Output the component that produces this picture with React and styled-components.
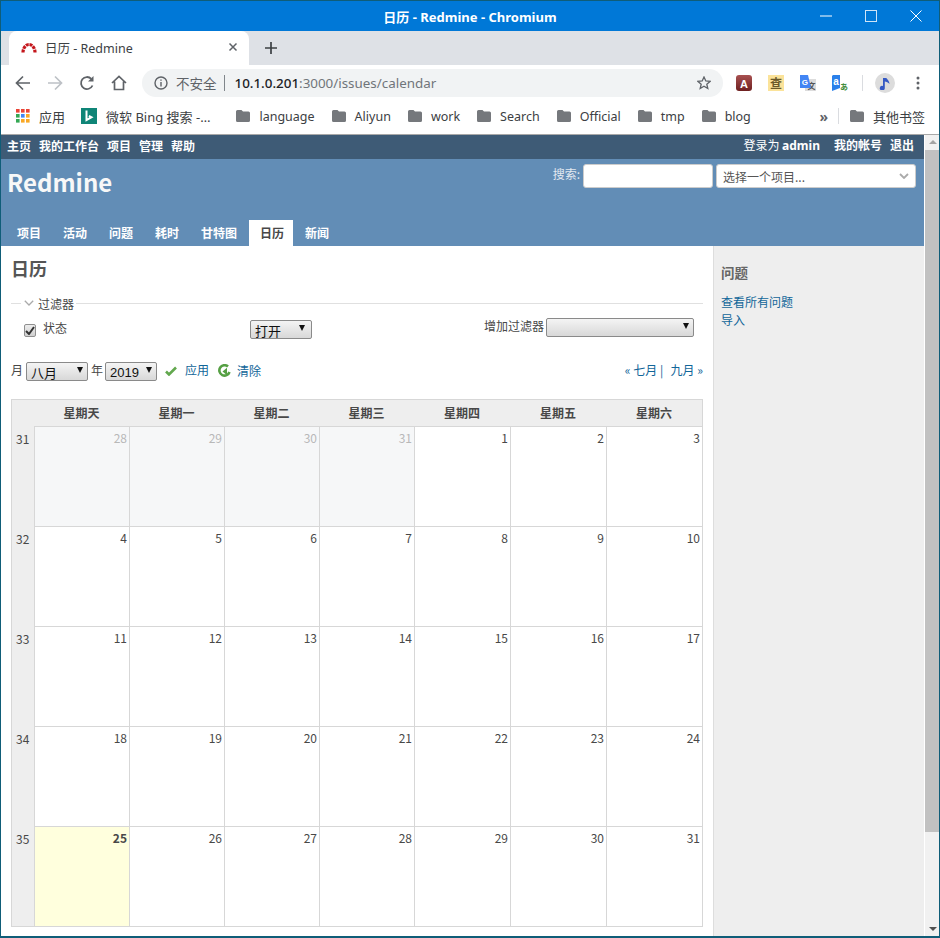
import React from "react";
import styled, { createGlobalStyle } from "styled-components";

const GlobalStyle = createGlobalStyle`
  html, body {
    margin: 0;
    padding: 0;
    background: #fff;
    overflow: hidden;
  }
  * { box-sizing: border-box; }
`;

const SANS = `"Noto Sans", "Noto Sans CJK SC", sans-serif`;
const CJK = `"Noto Sans CJK SC", "Noto Sans", sans-serif`;

const Window = styled.div`
  width: 940px;
  height: 938px;
  border: 1px solid #0f5d78;
  border-bottom-width: 2px;
  display: flex;
  flex-direction: column;
  overflow: hidden;
  font-family: ${CJK};
`;

const TitleBar = styled.div`
  height: 30px;
  flex: none;
  background: #0078d7;
  color: #fff;
  font: bold 13px ${SANS};
  display: flex;
  align-items: center;
  justify-content: center;
  position: relative;
`;

const WindowControls = styled.div`
  position: absolute;
  right: 0;
  top: 0;
  height: 30px;
  display: flex;
  align-items: center;
  gap: 33px;
  padding-right: 17px;
`;

const TabStrip = styled.div`
  height: 34px;
  flex: none;
  background: #dee1e6;
  display: flex;
  align-items: flex-end;
  padding-left: 8px;
`;

const Tab = styled.div`
  width: 240px;
  height: 34px;
  background: #fff;
  border-radius: 8px 8px 0 0;
  display: flex;
  align-items: center;
  padding: 0 11px 2px 12px;
  gap: 8px;
  font: 12.5px ${SANS};
  color: #3c4043;
`;

const TabTitle = styled.span`
  flex: 1;
`;

const NewTab = styled.div`
  width: 44px;
  height: 34px;
  display: flex;
  align-items: center;
  justify-content: center;
`;

const Toolbar = styled.div`
  height: 35px;
  flex: none;
  background: #fff;
  display: flex;
  align-items: center;
  padding-left: 14px;
`;

const NavIcons = styled.div`
  display: flex;
  align-items: center;
  gap: 16px;
`;

const Omnibox = styled.div`
  width: 581px;
  height: 28px;
  margin-left: 15px;
  border-radius: 14px;
  background: #f1f3f4;
  display: flex;
  align-items: center;
  padding: 0 12px 0 12px;
  color: #5f6368;
`;

const Insecure = styled.span`
  margin-left: 8px;
  padding-right: 7px;
  border-right: 1px solid #80868b;
  line-height: 16px;
  font-size: 13.5px;
`;

const Url = styled.span`
  margin-left: 10px;
  flex: 1;
  color: #70757a;
  font: 13.4px ${SANS};
  b {
    font-weight: 500;
    color: #202124;
  }
`;

const Extensions = styled.div`
  display: flex;
  align-items: center;
  gap: 16px;
  margin-left: 13px;
`;

const Divider = styled.div`
  width: 1px;
  height: 16px;
  background: #dadce0;
  margin-left: ${({ $ml }) => $ml || 0}px;
`;

const Avatar = styled.div`
  width: 20px;
  height: 20px;
  border-radius: 50%;
  background: #dcdcdc;
  display: flex;
  align-items: center;
  justify-content: center;
  margin-left: 12px;
`;

const MoreDots = styled.svg`
  margin-left: 21px;
`;

const Bookmarks = styled.div`
  height: 35px;
  flex: none;
  background: #fff;
  border-bottom: 1px solid #a8a8a8;
  display: flex;
  align-items: center;
  padding: 0 0 2px 15px;
  font: 12.5px ${SANS};
  color: #3c4043;
`;

const Bookmark = styled.div`
  display: flex;
  align-items: center;
  gap: 9px;
  font-size: ${({ $cjk }) => ($cjk ? "13px" : "12.5px")};
  margin-right: ${({ $gap }) => $gap}px;
  white-space: nowrap;
`;

const BookmarkSpacer = styled.div`
  flex: 1;
`;

const Chevrons = styled.span`
  color: #5f6368;
  font-size: 14px;
  font-weight: 700;
  margin-right: 10px;
`;

const OtherBookmarks = styled(Bookmark)`
  margin-left: 11px;
  margin-right: 14px;
`;

const Viewport = styled.div`
  flex: 1;
  display: flex;
  min-height: 0;
`;

const Page = styled.div`
  width: 923px;
  display: flex;
  flex-direction: column;
  font-size: 12px;
  color: #484848;
`;

const Scrollbar = styled.div`
  width: 15px;
  background: #f1f1f1;
  margin-left: 1px;
  margin-right: -1px;
  position: relative;
`;

const ScrollThumb = styled.div`
  position: absolute;
  left: 0;
  top: 15px;
  width: 100%;
  height: 682px;
  background: #c1c1c1;
`;

const ScrollArrow = styled.div`
  position: absolute;
  left: 4px;
  width: 0;
  height: 0;
  border-left: 4px solid transparent;
  border-right: 4px solid transparent;
  ${({ $down }) =>
    $down
      ? "bottom: 5px; border-top: 4px solid #505050;"
      : "top: 5px; border-bottom: 4px solid #a3a3a3;"}
`;

const TopMenu = styled.div`
  height: 24px;
  flex: none;
  background: #3e5b76;
  color: #fff;
  display: flex;
  align-items: center;
  justify-content: space-between;
  padding: 0 10px 4px 6px;
  font-weight: 700;
  font-size: 12px;
`;

const MenuGroup = styled.div`
  display: flex;
  gap: ${({ $gap }) => $gap}px;
`;

const LoggedAs = styled.span`
  font-weight: 400;
  margin-right: 6px;
  b {
    font-family: ${SANS};
    font-weight: 700;
  }
`;

const Header = styled.div`
  height: 87px;
  flex: none;
  background: #628db6;
  position: relative;
  padding: 5px 0 0 6px;
  color: #f8f8f8;
`;

const Brand = styled.h1`
  margin: 0;
  font: 700 24px/36px ${CJK};
  color: #f8f8f8;
`;

const QuickSearch = styled.div`
  position: absolute;
  right: 8px;
  top: 5px;
  display: flex;
  align-items: flex-start;
  gap: 3px;
  font-size: 12px;
  color: #e2e8f0;
`;

const SearchLabel = styled.span`
  line-height: 20px;
`;

const SearchInput = styled.input`
  width: 130px;
  height: 24px;
  border: 1px solid #ccc;
  border-radius: 3px;
  background: #fff;
  padding: 0;
`;

const ProjectJump = styled.div`
  width: 200px;
  height: 24px;
  border: 1px solid #ccc;
  border-radius: 3px;
  background: #fff;
  color: #555;
  display: flex;
  align-items: center;
  justify-content: space-between;
  padding: 0 6px 0 6px;
  font-size: 12px;
`;

const MainMenu = styled.div`
  position: absolute;
  left: 5px;
  bottom: 0;
  display: flex;
  height: 26px;
  font-weight: 700;
  font-size: 12px;
`;

const MainTab = styled.div`
  display: flex;
  align-items: center;
  padding: ${({ $active }) => ($active ? "0 9px 2px 11px" : "0 11px 2px")};
  margin: ${({ $active }) => ($active ? "0 1px" : "0")};
  background: ${({ $active }) => ($active ? "#fff" : "transparent")};
  color: ${({ $active }) => ($active ? "#484848" : "#fff")};
`;

const Body = styled.div`
  flex: 1;
  display: flex;
  min-height: 0;
`;

const Content = styled.div`
  width: 712px;
  background: #fff;
  padding: 9px 10px 0 10px;
`;

const PageTitle = styled.h2`
  margin: 0;
  font-size: 18px;
  line-height: 26px;
  font-weight: 700;
  color: #555;
`;

const FilterLegend = styled.div`
  display: flex;
  align-items: center;
  margin-top: 14px;
  font-size: 12px;
  height: 16px;
  &::before {
    content: "";
    width: 10px;
    height: 1px;
    background: #e0e0e0;
    margin-right: 3px;
  }
  &::after {
    content: "";
    flex: 1;
    height: 1px;
    background: #e0e0e0;
    margin-left: 2px;
  }
`;

const LegendChevron = styled.svg`
  margin-right: 4px;
`;

const FilterRow = styled.div`
  display: grid;
  grid-template-columns: 226px 1fr auto;
  height: 26px;
  padding: 0 9px 0 13px;
  margin-top: 7px;
  align-items: start;
`;

const FilterName = styled.div`
  display: flex;
  align-items: center;
  gap: 7px;
  height: 18px;
`;

const Checkbox = styled.span`
  width: 12px;
  height: 13px;
  margin-top: 6px;
  border: 1px solid #8f8f8f;
  border-radius: 2px;
  background: linear-gradient(#ededed, #d0d0d0);
  display: flex;
  align-items: center;
  justify-content: center;
`;

const AddFilter = styled.div`
  display: flex;
  align-items: flex-start;
  gap: 2px;
  white-space: nowrap;
  line-height: 15px;
`;

const NativeSelect = styled.div`
  width: ${({ $w }) => $w}px;
  height: 19px;
  margin-top: ${({ $mt }) => $mt || 0}px;
  margin-left: ${({ $ml }) => $ml || 0}px;
  border: 1px solid #8a8a8a;
  border-radius: 2px;
  background: linear-gradient(#f4f4f4, #d8d8d8);
  color: #111;
  font-size: 13px;
  line-height: 17px;
  padding-left: 4px;
  position: relative;
  flex: none;
  &::after {
    content: "";
    position: absolute;
    right: ${({ $arrow }) => $arrow || 4}px;
    top: 4px;
    border-left: 3.5px solid transparent;
    border-right: 3.5px solid transparent;
    border-top: 6px solid #111;
  }
`;

const SelectText = styled.span`
  position: relative;
  display: inline-block;
  line-height: 17px;
  top: ${({ $low }) => ($low ? "1px" : "0")};
  font-family: ${({ $latin }) => ($latin ? `"Liberation Sans", sans-serif` : CJK)};
`;

const DateRow = styled.div`
  display: flex;
  align-items: flex-start;
  height: 19px;
  margin-top: 18px;
  line-height: 15px;
  justify-content: space-between;
`;

const DateForm = styled.div`
  display: flex;
  align-items: flex-start;
  gap: 3px;
`;

const ActionLink = styled.a`
  color: #169;
  display: inline-flex;
  align-items: center;
  gap: ${({ $gap }) => $gap}px;
  margin-left: ${({ $ml }) => $ml}px;
  svg {
    margin-top: 2px;
  }
`;

const Paging = styled.div`
  color: #169;
  white-space: pre;
`;

const PagingNext = styled.span`
  margin-left: 2px;
`;

const Calendar = styled.div`
  display: grid;
  grid-template-columns: 22px repeat(4, 95px) repeat(3, 96px);
  grid-template-rows: 26px;
  grid-auto-rows: 100px;
  width: 692px;
  margin-top: 18px;
  border: 1px solid #d7d7d7;
`;

const WeekHead = styled.div`
  background: #eeeeee;
  font-weight: 700;
  color: #484848;
  display: flex;
  align-items: center;
  justify-content: center;
  padding-bottom: 2px;
`;

const WeekNumber = styled.div`
  background: #eeeeee;
  font: 12px ${CJK};
  padding: 4px 0 0 4px;
  color: #484848;
`;

const Day = styled.div`
  border-left: 1px solid #d7d7d7;
  border-top: 1px solid #d7d7d7;
  background: ${({ $today, $other }) => ($today ? "#ffffdd" : $other ? "#f6f7f8" : "#fff")};
  color: ${({ $other }) => ($other ? "#b8b8b8" : "#484848")};
  font: ${({ $today }) => ($today ? 700 : 400)} 12px ${CJK};
  text-align: right;
  padding: 2px 2px 0 0;
`;

const Sidebar = styled.div`
  flex: 1;
  background: #eeeeee;
  border-left: 1px solid #ddd;
  padding: 16px 7px;
`;

const SideTitle = styled.h3`
  margin: 0 0 11px;
  font-size: 13.5px;
  line-height: 20px;
  font-weight: 700;
  color: #666;
`;

const SideLink = styled.a`
  display: block;
  color: #169;
  line-height: 18px;
`;

const Folder = () => (
  <svg width="14" height="12" viewBox="0 0 14 12">
    <path fill="#75787c" d="M1.5 0h4l1.5 1.5h5.5A1.5 1.5 0 0 1 14 3v7.5a1.5 1.5 0 0 1-1.5 1.5h-11A1.5 1.5 0 0 1 0 10.5v-9A1.5 1.5 0 0 1 1.5 0z" />
  </svg>
);

const RedmineLogo = () => (
  <svg width="16" height="12" viewBox="0 0 16 12">
    <path
      d="M2 11.500A6 8 0 0 1 14 11.500"
      fill="none"
      stroke="#c4161c"
      strokeWidth="3.200"
      strokeDasharray="3 0.800"
    />
  </svg>
);

const AppsGrid = () => {
  const colors = ["#ea4335", "#ea4335", "#ea4335", "#34a853", "#4285f4", "#f9a825", "#34a853", "#f9a825", "#f9a825"];
  return (
    <svg width="14" height="14" viewBox="0 0 14 14">
      {colors.map((c, i) => (
        <rect key={i} x={(i % 3) * 5} y={Math.floor(i / 3) * 5} width="3.6" height="3.6" fill={c} />
      ))}
    </svg>
  );
};

const BingIcon = () => (
  <svg width="16" height="16" viewBox="0 0 16 16">
    <rect width="16" height="16" fill="#0f8577" />
    <path fill="none" stroke="#fff" strokeWidth="2" d="M5.500 2.500v9.500l5-2.800-2.600-1.400" />
  </svg>
);

const topLeft = ["主页", "我的工作台", "项目", "管理", "帮助"];
const tabs = ["项目", "活动", "问题", "耗时", "甘特图", "日历", "新闻"];
const heads = ["星期天", "星期一", "星期二", "星期三", "星期四", "星期五", "星期六"];
const folders = ["language", "Aliyun", "work", "Search", "Official", "tmp", "blog"];

const weeks = [
  { n: 31, days: [28, 29, 30, 31, 1, 2, 3], other: 4 },
  { n: 32, days: [4, 5, 6, 7, 8, 9, 10] },
  { n: 33, days: [11, 12, 13, 14, 15, 16, 17] },
  { n: 34, days: [18, 19, 20, 21, 22, 23, 24] },
  { n: 35, days: [25, 26, 27, 28, 29, 30, 31], today: 0 },
];

export default function App() {
  return (
    <Window>
      <GlobalStyle />
      <TitleBar>
        日历 - Redmine - Chromium
        <WindowControls>
          <svg width="12" height="12" viewBox="0 0 12 12">
            <path d="M0 6h12" stroke="#fff" strokeWidth="1" />
          </svg>
          <svg width="12" height="12" viewBox="0 0 12 12">
            <rect x=".5" y=".5" width="11" height="11" fill="none" stroke="#cfe4f7" />
          </svg>
          <svg width="12" height="12" viewBox="0 0 12 12">
            <path d="M.5.5l11 11M11.5.5l-11 11" stroke="#fff" />
          </svg>
        </WindowControls>
      </TitleBar>
      <TabStrip>
        <Tab>
          <RedmineLogo />
          <TabTitle>日历 - Redmine</TabTitle>
          <svg width="10" height="10" viewBox="0 0 10 10">
            <path d="M1.500 1.500l7 7M8.500 1.500l-7 7" stroke="#5f6368" strokeWidth="1.500" />
          </svg>
        </Tab>
        <NewTab>
          <svg width="12" height="12" viewBox="0 0 12 12">
            <path d="M6 0v12M0 6h12" stroke="#3c4043" strokeWidth="1.700" />
          </svg>
        </NewTab>
      </TabStrip>
      <Toolbar>
        <NavIcons>
          <svg width="16" height="16" viewBox="0 0 16 16">
            <path d="M15 8H2M8 1.500L1.500 8 8 14.500" fill="none" stroke="#5f6368" strokeWidth="1.700" />
          </svg>
          <svg width="16" height="16" viewBox="0 0 16 16">
            <path d="M1 8h13M8 1.500L14.500 8 8 14.500" fill="none" stroke="#bdc1c6" strokeWidth="1.700" />
          </svg>
          <svg width="16" height="16" viewBox="0 0 16 16">
            <path d="M13.500 10.500A6 6 0 1 1 12.300 3.800" fill="none" stroke="#5f6368" strokeWidth="1.800" />
            <path d="M14.500 1v5.500H9z" fill="#5f6368" />
          </svg>
          <svg width="16" height="16" viewBox="0 0 16 16">
            <path d="M1 8l7-6.500L15 8M3.500 6.500V14.500h9V6.500" fill="none" stroke="#5f6368" strokeWidth="1.700" />
          </svg>
        </NavIcons>
        <Omnibox>
          <svg width="14" height="14" viewBox="0 0 14 14">
            <circle cx="7" cy="7" r="6" fill="none" stroke="#5f6368" strokeWidth="1.400" />
            <path d="M7 6v4.500M7 3.400v1.400" stroke="#5f6368" strokeWidth="1.400" />
          </svg>
          <Insecure>不安全</Insecure>
          <Url>
            <b>10.1.0.201</b>:3000/issues/calendar
          </Url>
          <svg width="14" height="14" viewBox="0 0 14 14">
            <path d="M7 1l1.800 4 4.200.4-3.200 2.800 1 4.300L7 10.200 3.200 12.500l1-4.300L1 5.400 5.200 5z" fill="none" stroke="#5f6368" strokeWidth="1.300" />
          </svg>
        </Omnibox>
        <Extensions>
          <svg width="16" height="16" viewBox="0 0 16 16">
            <defs>
              <linearGradient id="acrobat" x1="0" y1="0" x2="0" y2="1">
                <stop offset="0" stopColor="#a85050" />
                <stop offset="1" stopColor="#6e2020" />
              </linearGradient>
            </defs>
            <rect width="16" height="16" rx="3" fill="url(#acrobat)" />
            <text x="8" y="12.500" textAnchor="middle" fontSize="11" fontWeight="700" fill="#fff" fontFamily="Liberation Sans">A</text>
          </svg>
          <svg width="16" height="16" viewBox="0 0 16 16">
            <rect width="16" height="16" fill="#fbe39a" />
            <text x="8" y="13" textAnchor="middle" fontSize="12" fontWeight="700" fill="#6b5a2a" fontFamily="Noto Sans CJK SC">查</text>
          </svg>
          <svg width="16" height="16" viewBox="0 0 16 16">
            <rect x="5" y="4" width="11" height="12" fill="#dcdcdc" />
            <text x="11.500" y="13.500" textAnchor="middle" fontSize="8" fontWeight="700" fill="#555" fontFamily="Noto Sans CJK SC">文</text>
            <path d="M0 0h8l3 13H0z" fill="#4285f4" />
            <text x="4.800" y="9.500" textAnchor="middle" fontSize="8" fontWeight="700" fill="#fff" fontFamily="Liberation Sans">G</text>
          </svg>
          <svg width="16" height="16" viewBox="0 0 16 16">
            <path d="M1 0h7v13L0 16V1z" fill="#2a80ea" />
            <text x="4" y="10" textAnchor="middle" fontSize="10" fontWeight="700" fill="#fff" fontFamily="Liberation Sans">a</text>
            <text x="12" y="15" textAnchor="middle" fontSize="8" fontWeight="700" fill="#3d8b37" fontFamily="Noto Sans CJK JP">あ</text>
          </svg>
          <Divider $ml={-2} />
        </Extensions>
        <Avatar>
          <svg width="12" height="14" viewBox="0 0 12 14">
            <path d="M4 2v8a2.500 2.200 0 1 0 1.800 2V5.500c1.500.2 3.500 1 4.700 2.500 0-3-2.500-5-3.200-6z" fill="#3458c4" />
          </svg>
        </Avatar>
        <MoreDots width="4" height="14" viewBox="0 0 4 14">
          <circle cx="2" cy="2" r="1.500" fill="#5f6368" />
          <circle cx="2" cy="7" r="1.500" fill="#5f6368" />
          <circle cx="2" cy="12" r="1.500" fill="#5f6368" />
        </MoreDots>
      </Toolbar>
      <Bookmarks>
        <Bookmark $gap={16} $cjk>
          <AppsGrid />
          应用
        </Bookmark>
        <Bookmark $gap={26} $cjk>
          <BingIcon />
          微软 Bing 搜索 -…
        </Bookmark>
        {folders.map((name) => (
          <Bookmark key={name} $gap={17}>
            <Folder />
            {name}
          </Bookmark>
        ))}
        <BookmarkSpacer />
        <Chevrons>»</Chevrons>
        <Divider />
        <OtherBookmarks $gap={14} $cjk>
          <Folder />
          其他书签
        </OtherBookmarks>
      </Bookmarks>
      <Viewport>
        <Page>
          <TopMenu>
            <MenuGroup $gap={8}>
              {topLeft.map((t) => (
                <span key={t}>{t}</span>
              ))}
            </MenuGroup>
            <MenuGroup $gap={8}>
              <LoggedAs>
                登录为 <b>admin</b>
              </LoggedAs>
              <span>我的帐号</span>
              <span>退出</span>
            </MenuGroup>
          </TopMenu>
          <Header>
            <Brand>Redmine</Brand>
            <QuickSearch>
              <SearchLabel>搜索:</SearchLabel>
              <SearchInput />
              <ProjectJump>
                选择一个项目...
                <svg width="10" height="6" viewBox="0 0 10 6">
                  <path d="M1 1l4 4 4-4" fill="none" stroke="#aaa" strokeWidth="1.800" />
                </svg>
              </ProjectJump>
            </QuickSearch>
            <MainMenu>
              {tabs.map((t) => (
                <MainTab key={t} $active={t === "日历"}>
                  {t}
                </MainTab>
              ))}
            </MainMenu>
          </Header>
          <Body>
            <Content>
              <PageTitle>日历</PageTitle>
              <FilterLegend>
                <LegendChevron width="10" height="6" viewBox="0 0 10 6">
                  <path d="M.8.8L5 5 9.200.8" fill="none" stroke="#aaa" strokeWidth="1.300" />
                </LegendChevron>
                过滤器
              </FilterLegend>
              <FilterRow>
                <FilterName>
                  <Checkbox>
                    <svg width="10" height="9" viewBox="0 0 10 9">
                      <path d="M1 5l3 3 5-7" fill="none" stroke="#333" strokeWidth="2" />
                    </svg>
                  </Checkbox>
                  状态
                </FilterName>
                <NativeSelect $w={62} $mt={2} $arrow={6}>
                  <SelectText $low>打开</SelectText>
                </NativeSelect>
                <AddFilter>
                  增加过滤器
                  <NativeSelect $w={148} />
                </AddFilter>
              </FilterRow>
              <DateRow>
                <DateForm>
                  月
                  <NativeSelect $w={62}>
                    <SelectText $low>八月</SelectText>
                  </NativeSelect>
                  年
                  <NativeSelect $w={52} $ml={-1}>
                    <SelectText $latin>2019</SelectText>
                  </NativeSelect>
                  <ActionLink $ml={5} $gap={8}>
                    <svg width="12" height="10" viewBox="0 0 12 10">
                      <path d="M1 5.500l3 3 7-7" fill="none" stroke="#62a84e" strokeWidth="2.600" />
                    </svg>
                    应用
                  </ActionLink>
                  <ActionLink $ml={6} $gap={6}>
                    <svg width="13" height="14" viewBox="0 0 13 14">
                      <path d="M10 2.500A5.200 5.200 0 1 0 11.500 8" fill="none" stroke="#56a044" strokeWidth="2.600" />
                      <path d="M4.500 7.500L9 3.800v7.400z" fill="#56a044" />
                    </svg>
                    清除
                  </ActionLink>
                </DateForm>
                <Paging>
                  {"« 七月 |  "}
                  <PagingNext>九月 »</PagingNext>
                </Paging>
              </DateRow>
              <Calendar>
                <WeekHead />
                {heads.map((h) => (
                  <WeekHead key={h}>{h}</WeekHead>
                ))}
                {weeks.map((w) => (
                  <React.Fragment key={w.n}>
                    <WeekNumber>{w.n}</WeekNumber>
                    {w.days.map((d, i) => (
                      <Day key={i} $other={i < (w.other || 0)} $today={w.today === i}>
                        {d}
                      </Day>
                    ))}
                  </React.Fragment>
                ))}
              </Calendar>
            </Content>
            <Sidebar>
              <SideTitle>问题</SideTitle>
              <SideLink>查看所有问题</SideLink>
              <SideLink>导入</SideLink>
            </Sidebar>
          </Body>
        </Page>
        <Scrollbar>
          <ScrollArrow />
          <ScrollThumb />
          <ScrollArrow $down />
        </Scrollbar>
      </Viewport>
    </Window>
  );
}
